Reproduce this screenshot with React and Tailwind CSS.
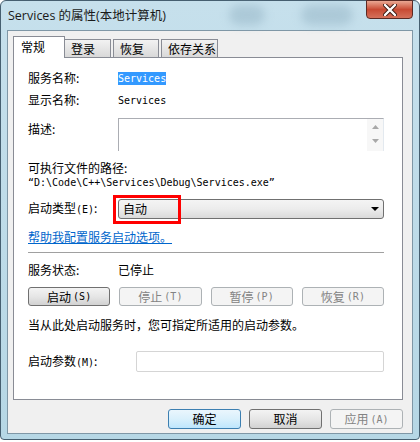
const cjk = "font-['Noto_Sans_CJK_SC',sans-serif]"
const mono = "font-['DejaVu_Sans_Mono','Noto_Sans_CJK_SC',monospace]"

const Label = ({ children, className = '' }) => (
  <div className={`w-[90px] shrink-0 text-[12px] leading-[16px] text-black ${className}`}>{children}</div>
)

const Key = ({ k }) => <span className={`${mono} text-[10px] ml-[2px]`}>({k})</span>

const ActionButton = ({ text, k, disabled }) => (
  <div
    className={
      disabled
        ? 'flex h-[19px] items-center justify-center rounded-[3px] border border-[#adb2b5] bg-[#f4f4f4] text-[12px] text-[#838383]'
        : 'flex h-[19px] items-center justify-center rounded-[3px] border border-[#707070] bg-gradient-to-b from-[#f3f3f3] via-[#e6e6e6] to-[#d2d2d2] text-[12px] text-black'
    }
  >
    {text}
    <Key k={k} />
  </div>
)

const Tab = ({ text, active, className = '' }) => (
  <div
    className={
      active
        ? `-mb-px flex h-[22px] w-[52px] items-start border border-b-0 border-[#898c95] bg-white pl-[7px] pt-[2px] text-[12px] leading-[16px] ${className}`
        : `flex h-[18px] items-start border border-b-0 border-[#898c95] bg-gradient-to-b from-[#f2f2f2] to-[#d9d9d9] pl-[6px] pt-[1px] text-[12px] leading-[16px] ${className}`
    }
  >
    {text}
  </div>
)

export default function App() {
  return (
    <div className={`h-[442px] w-[420px] bg-white ${cjk}`}>
      <div className="flex h-[440px] w-[420px] flex-col rounded-t-[6px] rounded-b-[4px] border border-[#465f70] bg-gradient-to-b from-[#c6e0ec] to-[#b6d7e5]">
        {/* title bar */}
        <div className="relative flex h-[29px] shrink-0 items-start">
          <div className="absolute left-[228px] top-[4px] h-[20px] w-[36px] rounded-full bg-[#93b3c4] opacity-50 blur-[5px]" />
          <div className="absolute left-[300px] top-[4px] h-[20px] w-[52px] rounded-full bg-[#93b3c4] opacity-50 blur-[5px]" />
          <div className="relative ml-[7px] mt-[6px] text-[12.5px] leading-[17px] text-[#1a1a1a] font-['Open_Sans','Noto_Sans_CJK_SC',sans-serif]">
            Services 的属性(本地计算机)
          </div>
          <div className="relative ml-auto mr-[6px] -mt-px flex h-[19px] w-[47px] items-center justify-center rounded-b-[4px] border border-[#5b2a24] bg-gradient-to-b from-[#e9a793] via-[#c84a33] to-[#d5705a]">
            <svg width="14" height="12" viewBox="0 0 14 12">
              <path d="M2 1 L12 11 M12 1 L2 11" stroke="#3a1a14" strokeWidth="4.2" strokeLinecap="round" />
              <path d="M2 1 L12 11 M12 1 L2 11" stroke="#ffffff" strokeWidth="2.4" strokeLinecap="round" />
            </svg>
          </div>
        </div>

        {/* client area */}
        <div className="mx-[6px] h-[404px] border border-[#7f97a6] bg-[#f0f0f0] pl-[5px] pt-[5px]">
          <div className="relative z-10 flex h-[21px] items-end">
            <Tab text="常规" active />
            <Tab text="登录" className="-ml-px w-[47px]" />
            <Tab text="恢复" className="ml-[2px] w-[46px]" />
            <Tab text="依存关系" className="ml-[2px] w-[57px]" />
          </div>

          <div className="h-[343px] w-[390px] border border-[#898c95] bg-white pl-[14px] pr-[18px] pt-[12px]">
            <div className="flex h-[16px] items-center">
              <Label>服务名称:</Label>
              <span className={`${mono} bg-[#3399ff] text-[10px] leading-[13px] text-white`}>Services</span>
            </div>
            <div className="mt-[6px] flex h-[16px] items-center">
              <Label>显示名称:</Label>
              <span className={`${mono} text-[10px] leading-[13px]`}>Services</span>
            </div>
            <div className="mt-[10px] flex h-[33px] items-start">
              <Label className="pt-[3px]">描述:</Label>
              <div className="flex h-[33px] flex-1 border border-[#abadb3] border-b-0 border-r-[#e3e9ef] bg-white">
                <div className="flex-1" />
                <div className="flex w-[16px] flex-col items-center bg-[#f7f7f7] pt-[6px]">
                  <svg width="7" height="4" viewBox="0 0 7 4"><path d="M0 4 L3.5 0 L7 4 Z" fill="#a8a8a8" /></svg>
                  <svg className="mt-[10px]" width="7" height="4" viewBox="0 0 7 4"><path d="M0 0 L3.5 4 L7 0 Z" fill="#a8a8a8" /></svg>
                </div>
              </div>
            </div>
            <div className="mt-[9px] h-[16px] text-[12px] leading-[16px]">可执行文件的路径:</div>
            <div className={`${mono} h-[14px] text-[10px] leading-[14px]`}>“D:\Code\C++\Services\Debug\Services.exe”</div>

            <div className="mt-[9px] flex h-[20px] items-center">
              <Label>
                启动类型<span className={`${mono} text-[10px]`}>(E)</span>:
              </Label>
              <div className="relative flex h-[20px] flex-1 items-center rounded-[3px] border border-[#707070] bg-gradient-to-b from-[#f4f4f4] via-[#ececec] to-[#dadada] pl-[4px] pr-[4px]">
                <span className="text-[12px] leading-[16px]">自动</span>
                <svg className="ml-auto" width="8" height="4" viewBox="0 0 8 4"><path d="M0 0 L8 0 L4 4 Z" fill="#000" /></svg>
                <div className="absolute left-[-6px] top-[-5px] h-[29px] w-[68px] border-[3px] border-[#ff0000]" />
              </div>
            </div>

            <div className="mt-[10px] h-[16px] text-[12px] leading-[16px] text-[#0066cc] underline">帮助我配置服务启动选项。</div>
            <div className="mt-[7px] border-t border-[#a0a0a0]" />

            <div className="mt-[9px] flex h-[16px] items-center">
              <Label>服务状态:</Label>
              <span className="text-[12px] leading-[16px]">已停止</span>
            </div>
            <div className="mt-[9px] grid grid-cols-4 gap-[9px]">
              <ActionButton text="启动" k="S" />
              <ActionButton text="停止" k="T" disabled />
              <ActionButton text="暂停" k="P" disabled />
              <ActionButton text="恢复" k="R" disabled />
            </div>
            <div className="mt-[11px] h-[16px] text-[12px] leading-[16px]">当从此处启动服务时，您可指定所适用的启动参数。</div>

            <div className="mt-[18px] flex h-[21px] items-center">
              <div className="w-[108px] shrink-0 text-[12px] leading-[16px]">
                启动参数<span className={`${mono} text-[10px]`}>(M)</span>:
              </div>
              <div className="h-[21px] flex-1 rounded-[2px] border border-[#d5d5d5] bg-white" />
            </div>
          </div>

          <div className="mt-[9px] flex w-[390px] justify-end gap-[8px]">
            <div className="flex h-[20px] w-[73px] items-center justify-center rounded-[3px] border border-[#3c7fb1] bg-gradient-to-b from-[#eaf6fd] via-[#d9f0fc] to-[#bee6fd] text-[12px]">确定</div>
            <div className="flex h-[20px] w-[73px] items-center justify-center rounded-[3px] border border-[#707070] bg-gradient-to-b from-[#f3f3f3] via-[#e6e6e6] to-[#d2d2d2] text-[12px]">取消</div>
            <div className="flex h-[20px] w-[73px] items-center justify-center rounded-[3px] border border-[#adb2b5] bg-[#f4f4f4] text-[12px] text-[#838383]">
              应用<Key k="A" />
            </div>
          </div>
        </div>
      </div>
    </div>
  )
}
